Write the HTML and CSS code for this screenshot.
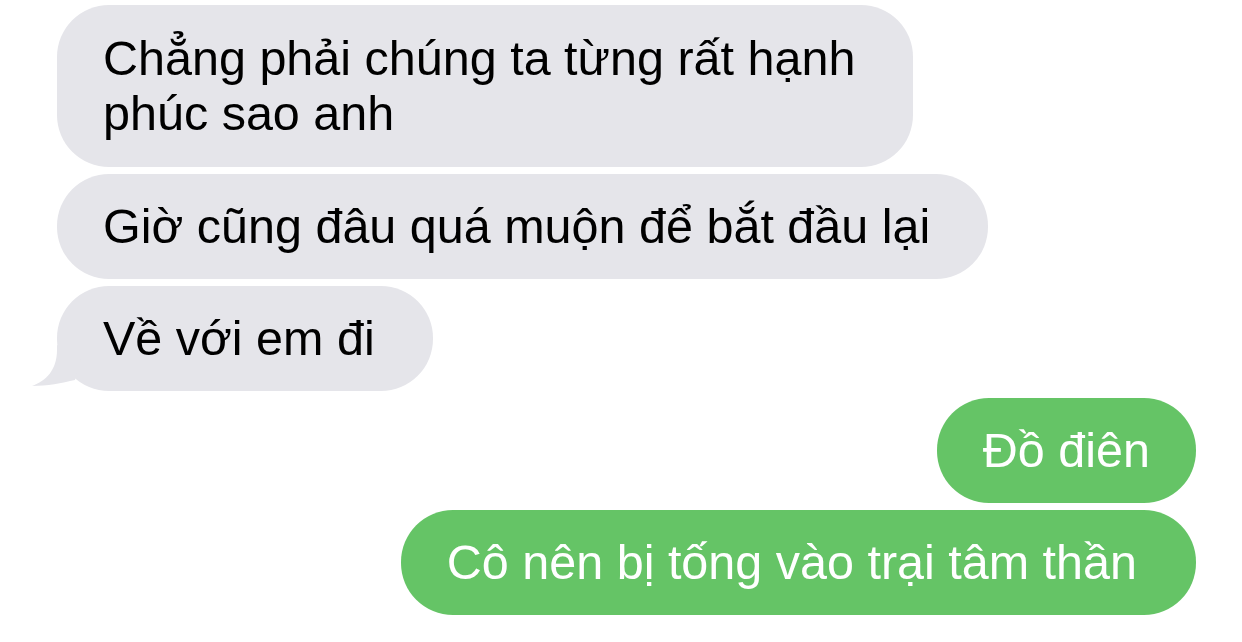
FILE: index.html
```html
<!DOCTYPE html>
<html lang="vi">
<head>
<meta charset="utf-8">
<title>Messages</title>
<link rel="stylesheet" href="styles.css">
</head>
<body>
<main class="thread">
  <div class="bubble in two-line">Chẳng phải chúng ta từng rất hạnh<br>phúc sao anh</div>
  <div class="bubble in">Giờ cũng đâu quá muộn để bắt đầu lại</div>
  <div class="bubble in">Về với em đi<svg class="tail-svg" width="60" height="46" viewBox="0 0 60 46"><path d="M25 0 L25 5 C25 25 14 36 0 41 C15 41 30 38 43 35 L50 10 Z" fill="#e5e5ea"/></svg></div>
  <div class="bubble out">Đồ điên</div>
  <div class="bubble out last">Cô nên bị tống vào trại tâm thần</div>
</main>
</body>
</html>
```
FILE: styles.css
```css
html, body {
  margin: 0;
  padding: 0;
  background: #ffffff;
}
.thread {
  display: flex;
  flex-direction: column;
  gap: 7px;
  padding: 5px 46px 0 57px;
  font-family: "Liberation Sans", Arial, sans-serif;
  font-size: 48.5px;
  line-height: 55px;
}
.bubble {
  position: relative;
  padding: 25px 46px;
  border-radius: 52px;
}
.two-line {
  padding-top: 26px;
  padding-bottom: 26px;
}
.in {
  align-self: flex-start;
  background: #e5e5ea;
  color: #000000;
  padding-right: 58px;
}
.out {
  align-self: flex-end;
  background: #65c466;
  color: #ffffff;
}
.last {
  padding-right: 59px;
}
.tail-svg {
  position: absolute;
  left: -25px;
  bottom: 0;
}
```
